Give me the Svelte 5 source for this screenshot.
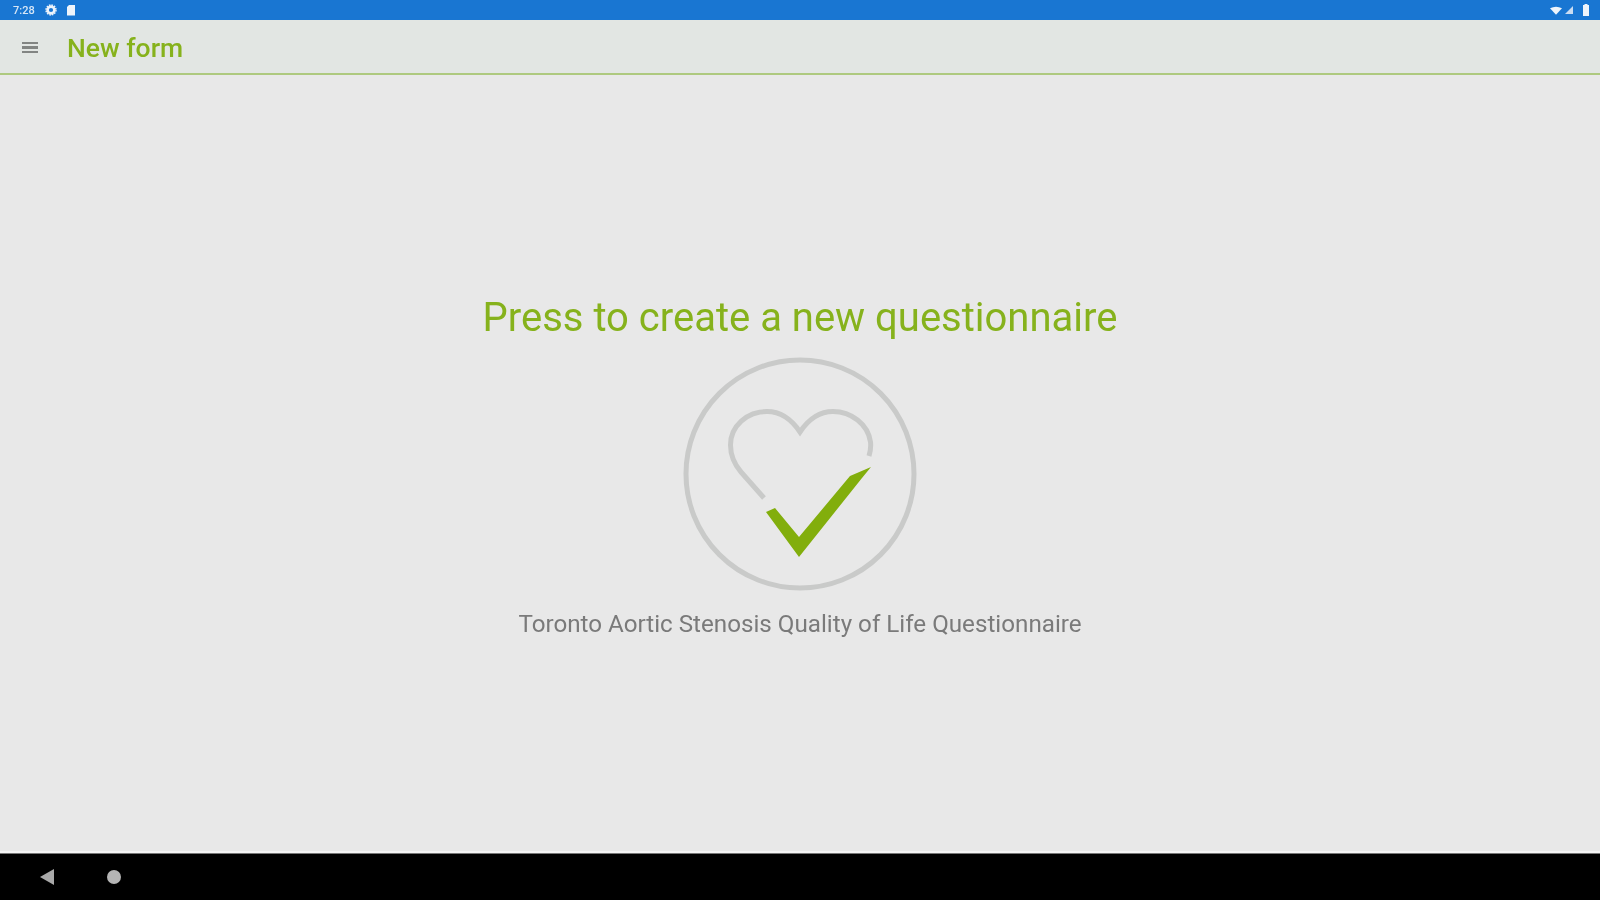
<script lang="ts">
  const title = 'Press to create a new questionnaire';
  const subtitle = 'Toronto Aortic Stenosis Quality of Life Questionnaire';
</script>

<div class="screen">
  <div class="status-bar">
    <div class="status-left soft">
      <span class="clock">7:28</span>
      <svg class="gear" width="12" height="12" viewBox="0 0 12 12">
        <circle cx="6" cy="6" r="3.4" fill="none" stroke="#eef4fb" stroke-width="2.6" />
        <circle cx="6" cy="6" r="5" fill="none" stroke="#eef4fb" stroke-width="1.4" stroke-dasharray="1.6 1" />
      </svg>
      <svg width="10" height="12" viewBox="0 0 10 12">
        <path d="M3 1h6v10.500H1V3z" fill="#eef4fb" />
      </svg>
    </div>
    <div class="status-right soft">
      <svg width="12" height="9" viewBox="0 0 14 10">
        <path d="M0 2.500Q7-1.500 14 2.500L7 10z" fill="#eef4fb" />
      </svg>
      <svg width="8" height="8" viewBox="0 0 9 9">
        <path d="M9 0v9H0z" fill="#c9dcf2" />
      </svg>
      <svg class="battery" width="6" height="12" viewBox="0 0 6 12">
        <path d="M1.500 0h3v1H6v11H0V1h1.500z" fill="#eef4fb" />
      </svg>
    </div>
  </div>

  <header class="app-bar">
    <button class="menu soft" aria-label="Menu">
      <span></span><span></span><span></span>
    </button>
    <h1 class="soft">New form</h1>
  </header>

  <main class="content">
    <button class="create">
      <span class="title soft">{title}</span>
      <svg class="logo soft" width="240" height="240" viewBox="680 355 240 240">
        <circle cx="800" cy="475" r="114" fill="none" stroke="#c9cac9" stroke-width="5" />
        <path
          d="M869 457C870.500 452 871 447 870.500 443C868 425 851 412.500 833 412.500C819 412.500 808 421 800 433C792 421 781 412.500 767 412.500C747 412.500 730.500 427 730.500 446C730.500 457 735 466 741 473L764 499"
          fill="none"
          stroke="#c9cac9"
          stroke-width="5"
        />
        <path d="M766 513L775 509L799 538L850 477L871 468L862 479L799 558z" fill="#82ae0c" />
      </svg>
      <span class="subtitle soft">{subtitle}</span>
    </button>
  </main>

  <nav class="nav-bar">
    <svg class="soft" width="14" height="16" viewBox="0 0 14 16">
      <path d="M14 0V16L0 8z" fill="#a9a9a9" />
    </svg>
    <span class="home soft"></span>
  </nav>
</div>

<style>
  :global(body) {
    margin: 0;
    background: #e8e8e8;
  }
  .screen {
    display: flex;
    flex-direction: column;
    height: 900px;
    overflow: hidden;
    font-family: Roboto, 'Liberation Sans', sans-serif;
    background: #e8e8e8;
  }
  /* the reference is an upscaled capture, everything in it is a little soft */
  .soft {
    filter: blur(0.7px);
  }
  .status-bar {
    flex: none;
    display: flex;
    justify-content: space-between;
    align-items: center;
    height: 20px;
    padding: 0 11px 0 13px;
    background: #1976d2;
  }
  .status-left, .status-right {
    display: flex;
    align-items: center;
  }
  .status-left { gap: 9px; }
  .status-right { gap: 3px; }
  .battery { margin-left: 7px; }
  .clock {
    width: 23px;
    font-size: 11px;
    font-weight: 500;
    color: #d7e6f6;
  }
  .app-bar {
    flex: none;
    display: flex;
    align-items: center;
    box-sizing: border-box;
    height: 55px;
    padding: 2px 22px 0;
    background: #e2e6e3;
    border-bottom: 2px solid #aec97f;
  }
  .menu {
    display: flex;
    flex-direction: column;
    gap: 2px;
    width: 16px;
    padding: 0;
    margin-right: 29px;
    border: 0;
    background: none;
  }
  .menu span {
    height: 2.500px;
    background: #828583;
  }
  h1 {
    margin: 0;
    font-size: 26.500px;
    font-weight: 500;
    color: #86b21c;
  }
  .content {
    flex: 1;
    display: flex;
    justify-content: center;
    padding-top: 221px;
  }
  .create {
    display: flex;
    flex-direction: column;
    align-items: center;
    align-self: flex-start;
    padding: 0;
    border: 0;
    background: none;
    font-family: inherit;
  }
  .title {
    font-size: 40px;
    line-height: 44px;
    color: #86b21c;
  }
  .logo {
    display: block;
    margin-top: 14px;
  }
  .subtitle {
    margin-top: 15px;
    font-size: 24.200px;
    line-height: 30px;
    color: #7a7a7a;
  }
  .nav-bar {
    flex: none;
    display: flex;
    align-items: center;
    gap: 53px;
    height: 46px;
    padding-left: 40px;
    background: #000;
    box-shadow: 0 -1px 0 #777, 0 -3px 0 #f4f4f4;
  }
  .home {
    width: 14px;
    height: 14px;
    border-radius: 50%;
    background: #b5b5b5;
  }
</style>
